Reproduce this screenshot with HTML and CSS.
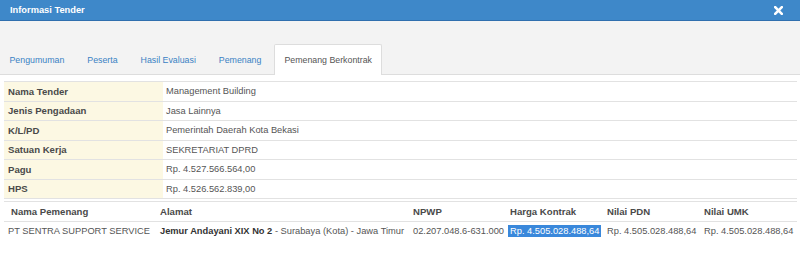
FILE: index.html
```html
<!DOCTYPE html>
<html lang="id">
<head>
  <meta charset="UTF-8">
  <meta name="viewport" content="width=device-width, initial-scale=1.0">
  <title>Informasi Tender</title>
  <link rel="stylesheet" href="styles.css">
</head>
<body>
  <div class="modal">
    <div class="modal-header">
      <span class="modal-title">Informasi Tender</span>
      <span class="close" title="Tutup">
        <svg width="9" height="9" viewBox="0 0 9 9">
          <path d="M1.2 1.2 L7.8 7.8 M7.8 1.2 L1.2 7.8" stroke="#fff" stroke-width="2.6" stroke-linecap="square"/>
        </svg>
      </span>
    </div>
    <div class="modal-body">
      <ul class="nav-tabs">
        <li><a href="#">Pengumuman</a></li>
        <li><a href="#">Peserta</a></li>
        <li><a href="#">Hasil Evaluasi</a></li>
        <li><a href="#">Pemenang</a></li>
        <li class="active"><a href="#">Pemenang Berkontrak</a></li>
      </ul>
      <div class="tab-content">
        <table class="info">
          <tr><th>Nama Tender</th><td>Management Building</td></tr>
          <tr><th>Jenis Pengadaan</th><td>Jasa Lainnya</td></tr>
          <tr><th>K/L/PD</th><td>Pemerintah Daerah Kota Bekasi</td></tr>
          <tr><th>Satuan Kerja</th><td>SEKRETARIAT DPRD</td></tr>
          <tr><th>Pagu</th><td>Rp. 4.527.566.564,00</td></tr>
          <tr><th>HPS</th><td>Rp. 4.526.562.839,00</td></tr>
        </table>
        <table class="winner">
          <colgroup>
            <col class="c-name"><col class="c-addr"><col class="c-npwp">
            <col class="c-money"><col class="c-money"><col>
          </colgroup>
          <tr>
            <th class="first">Nama Pemenang</th>
            <th>Alamat</th>
            <th>NPWP</th>
            <th>Harga Kontrak</th>
            <th>Nilai PDN</th>
            <th>Nilai UMK</th>
          </tr>
          <tr>
            <td>PT SENTRA SUPPORT SERVICE</td>
            <td><b>Jemur Andayani XIX No 2</b> - Surabaya (Kota) - Jawa Timur</td>
            <td>02.207.048.6-631.000</td>
            <td><span class="selected">Rp. 4.505.028.488,64</span></td>
            <td>Rp. 4.505.028.488,64</td>
            <td>Rp. 4.505.028.488,64</td>
          </tr>
        </table>
      </div>
    </div>
  </div>
</body>
</html>
```

FILE: styles.css
```css
body {
  margin: 0;
  font-family: "Liberation Sans", Arial, sans-serif;
  font-size: 9.3px;
  color: #555;
  background: #fff;
}
.modal {
  width: 800px;
}
.modal-header {
  display: flex;
  align-items: center;
  justify-content: space-between;
  height: 20px;
  padding: 0 17px 0 10px;
  background: #3e88c9;
  border-bottom: 1px solid #2f6fae;
}
.modal-title {
  color: #fff;
  font-weight: bold;
}
.close {
  display: flex;
  align-items: center;
}
.modal-body {
  background: #f3f3f3;
}
.nav-tabs {
  display: flex;
  list-style: none;
  margin: 0;
  padding: 23px 0 0 0;
  border-bottom: 1px solid #ddd;
  font-size: 8.8px;
}
.nav-tabs li {
  margin: 0 2px -1px 0;
}
.nav-tabs li:first-child {
  margin-left: -1px;
}
.nav-tabs a {
  display: flex;
  align-items: center;
  height: 29px;
  padding: 0 9.5px;
  color: #3a82c4;
  text-decoration: none;
  border: 1px solid transparent;
  border-bottom: none;
  border-radius: 2px 2px 0 0;
}
.nav-tabs .active a {
  height: 30px;
  background: #fff;
  color: #555;
  border-color: #ddd;
}
.tab-content {
  background: #fff;
  padding: 6px 3px 24px 4px;
}
table {
  width: 100%;
  border-collapse: collapse;
}
.info th,
.info td {
  height: 18.5px;
  padding: 0 3px;
  border-top: 1px solid #e2e2e2;
  text-align: left;
  white-space: nowrap;
}
.info th {
  width: 152px;
  padding-left: 4px;
  background: #fcf8e3;
  color: #4a4a4a;
  font-size: 9.6px;
  font-weight: bold;
}
.info tr:last-child td,
.info tr:last-child th {
  border-bottom: 1px solid #e2e2e2;
}
.winner {
  margin-top: 2px;
  table-layout: fixed;
}
.winner th,
.winner td {
  height: 18.5px;
  padding: 0 4px;
  text-align: left;
  white-space: nowrap;
  overflow: visible;
}
.winner th {
  border-top: 1px solid #e2e2e2;
  border-bottom: 1px solid #e2e2e2;
  color: #4a4a4a;
  font-size: 9.6px;
  font-weight: bold;
}
.winner th.first {
  padding-left: 7px;
}
.winner td b {
  color: #333;
}
.c-name { width: 152px; }
.c-addr { width: 253px; }
.c-npwp { width: 97px; }
.c-money { width: 97px; }
.selected {
  display: inline-block;
  margin-left: -2px;
  padding: 1px 2px;
  background: #3a88db;
  color: #fff;
}
```
